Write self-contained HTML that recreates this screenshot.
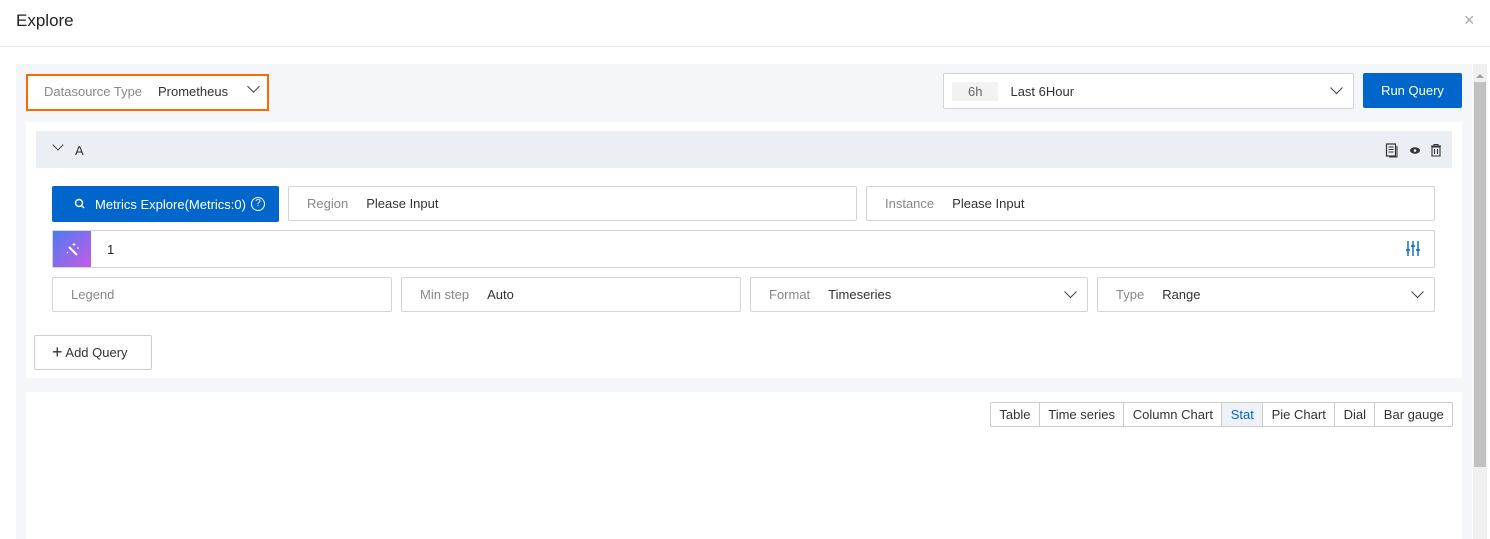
<!DOCTYPE html><html><head><style>
*{box-sizing:border-box;margin:0;padding:0}
body{width:1490px;height:539px;overflow:hidden;background:#fff;font-family:"Liberation Sans",sans-serif;font-size:13px;color:#333;position:relative}
.a{position:absolute}
.inp{position:absolute;border:1px solid #d4d4d4;border-radius:2px;background:#fff;height:35px;display:flex;align-items:center;padding-left:18px}
.lbl{color:#888;margin-right:18px}
.chev{position:absolute;right:12px;top:50%;width:9px;height:9px;border-right:1.5px solid #444;border-bottom:1.5px solid #444;transform:translateY(-85%) rotate(45deg)}
.tabs{position:absolute;left:990px;top:402px;height:25px;display:flex;border:1px solid #ccc;border-radius:2px;background:#fff}
.tabs div{padding:0 8.4px;line-height:23px;border-left:1px solid #ccc;color:#333}
.tabs div:first-child{border-left:0}
</style></head><body>
<div class="a" style="left:16px;top:11px;font-size:17px;color:#222">Explore</div>
<div class="a" style="left:1464px;top:10px;font-size:18px;color:#aaa">×</div>
<div class="a" style="left:0;top:46px;width:1490px;height:1px;background:#e8e8e8"></div>
<div class="a" style="left:16px;top:64px;width:1456px;height:475px;background:#f4f6f9"></div>
<div class="a" style="left:1473px;top:64px;width:14px;height:475px;background:#f0f0f0"></div>
<div class="a" style="left:1474px;top:82px;width:12px;height:385px;background:#c1c1c1"></div>
<div class="a" style="left:1476px;top:70px;width:0;height:0;border:4px solid transparent;border-bottom:4px solid #a0a0a0"></div>
<div class="a" style="left:26px;top:74px;width:243px;height:37px;border:2px solid #ff6a00;background:#fff"></div>
<div class="a" style="left:44px;top:84px;color:#888">Datasource Type</div>
<div class="a" style="left:158px;top:84px;color:#333">Prometheus</div>
<div class="a" style="left:249px;top:82px;width:9px;height:9px;border-right:1.5px solid #444;border-bottom:1.5px solid #444;transform:rotate(45deg)"></div>
<div class="inp" style="left:943px;top:73px;width:411px;height:36px;padding-left:8px"><span style="background:#f2f2f2;padding:2px 16px;color:#666;margin-right:12px">6h</span><span>Last 6Hour</span><i class="chev"></i></div>
<div class="a" style="left:1363px;top:73px;width:99px;height:35px;background:#0066cc;border-radius:2px;color:#fff;line-height:35px;text-align:center">Run Query</div>
<div class="a" style="left:26px;top:122px;width:1436px;height:256px;background:#fff"></div>
<div class="a" style="left:36px;top:131px;width:1416px;height:37px;background:#ebeef3"></div>
<div class="a" style="left:54px;top:141px;width:8px;height:8px;border-right:1.5px solid #444;border-bottom:1.5px solid #444;transform:rotate(45deg)"></div>
<div class="a" style="left:75px;top:143px;color:#333">A</div>
<svg class="a" style="left:1385px;top:143px" width="60" height="15" viewBox="0 0 60 15"><rect x="1.5" y="1" width="9" height="12" fill="none" stroke="#333" stroke-width="1.2"/><path d="M3.5 4h5M3.5 6.5h5M3.5 9h5M12 3v11H4" fill="none" stroke="#333" stroke-width="1"/><ellipse cx="30" cy="7.5" rx="5" ry="3.2" fill="#333"/><circle cx="30" cy="7.5" r="1.3" fill="#fff"/><path d="M46 3h10M49 3V1.5h4V3M47 4h8v9h-8z M49.5 6v5M52.5 6v5" fill="none" stroke="#333" stroke-width="1.1"/></svg>
<div class="a" style="left:52px;top:186px;width:227px;height:36px;background:#0066cc;border-radius:2px;color:#fff;display:flex;align-items:center;padding-left:22px"><svg width="12" height="12" viewBox="0 0 12 12"><circle cx="5" cy="5" r="3.5" fill="none" stroke="#fff" stroke-width="1.4"/><path d="M7.5 7.5L10 10" stroke="#fff" stroke-width="1.4"/></svg><span style="margin-left:9px">Metrics Explore(Metrics:0)</span><span style="margin-left:5px;width:14px;height:14px;border:1.3px solid #fff;border-radius:50%;font-size:10px;line-height:12px;text-align:center">?</span></div>
<div class="inp" style="left:288px;top:186px;width:569px"><span class="lbl">Region</span><span>Please Input</span></div>
<div class="inp" style="left:866px;top:186px;width:569px"><span class="lbl">Instance</span><span>Please Input</span></div>
<div class="inp" style="left:52px;top:230px;width:1383px;height:38px;padding-left:0"><div style="width:38px;height:36px;background:linear-gradient(135deg,#4e7bf0,#c45ce8);display:flex;align-items:center;justify-content:center"><svg width="16" height="16" viewBox="0 0 16 16"><path d="M5 6l8 8" stroke="#fff" stroke-width="2"/><path d="M3 11l1 1M10 2v3M8.5 3.5h3M13 7h2" stroke="#fff" stroke-width="1"/></svg></div><span style="margin-left:16px;color:#223">1</span><svg class="a" style="right:14px;top:10px" width="14" height="15" viewBox="0 0 14 15"><path d="M2 0v15M7 0v15M12 0v15M0 9h4M5 5h4M10 9h4" stroke="#0066cc" stroke-width="1.4"/></svg></div>
<div class="inp" style="left:52px;top:277px;width:340px"><span class="lbl">Legend</span></div>
<div class="inp" style="left:401px;top:277px;width:340px"><span class="lbl">Min step</span><span>Auto</span></div>
<div class="inp" style="left:750px;top:277px;width:338px"><span class="lbl">Format</span><span>Timeseries</span><i class="chev"></i></div>
<div class="inp" style="left:1097px;top:277px;width:338px"><span class="lbl">Type</span><span>Range</span><i class="chev"></i></div>
<div class="a" style="left:34px;top:335px;width:118px;height:35px;border:1px solid #ccc;border-radius:2px;background:#fff;line-height:33px;padding-left:17px"><b style="font-size:18px;font-weight:normal;vertical-align:-1px">+</b> Add Query</div>
<div class="a" style="left:26px;top:392px;width:1436px;height:147px;background:#fff"></div>
<div class="tabs"><div>Table</div><div>Time series</div><div>Column Chart</div><div style="background:#eef1f6;color:#0066cc">Stat</div><div>Pie Chart</div><div>Dial</div><div>Bar gauge</div></div>
</body></html>
